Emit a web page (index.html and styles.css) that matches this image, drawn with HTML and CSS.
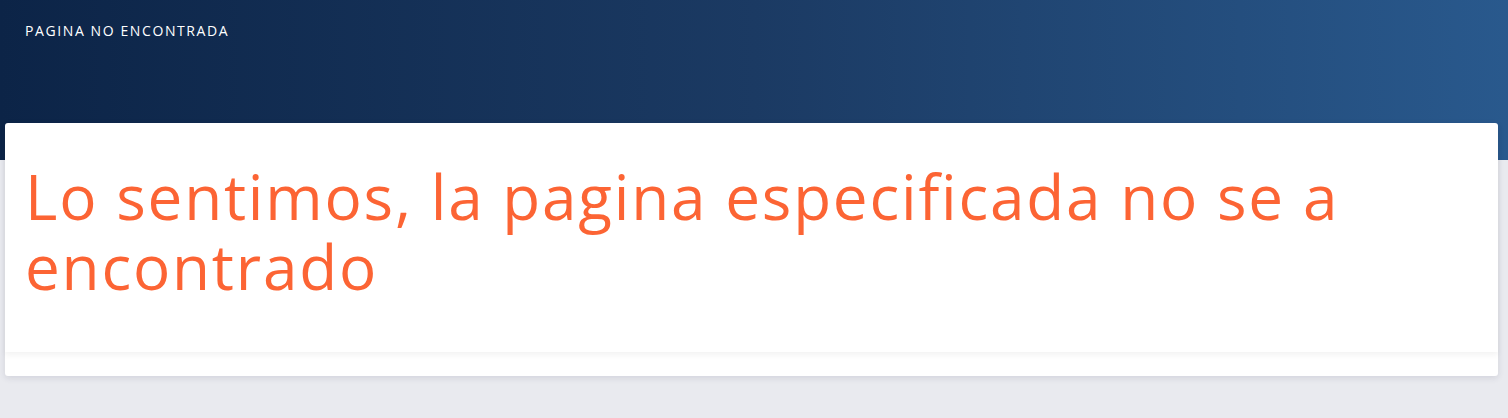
FILE: index.html
```html
<!DOCTYPE html>
<html lang="es">
<head>
<meta charset="utf-8">
<title>Pagina no encontrada</title>
<link rel="stylesheet" href="styles.css">
</head>
<body>
<header class="hero">
  <div class="hero-title">PAGINA NO ENCONTRADA</div>
</header>
<main class="content">
  <section class="card">
    <div class="card-body">
      <h1 class="message">Lo sentimos, la pagina especificada no se a encontrado</h1>
    </div>
    <div class="card-footer"></div>
  </section>
</main>
</body>
</html>
```

FILE: styles.css
```css
* { box-sizing: border-box; }
html, body { margin: 0; padding: 0; }
body {
  background: #e9eaef;
  font-family: "Open Sans", "Lato", sans-serif;
  height: 418px;
  overflow: hidden;
}
.hero {
  height: 160px;
  background: linear-gradient(90deg, #0c2447 0%, #1b3a63 50%, #29598d 100%);
  padding: 22px 25px 0;
}
.hero-title {
  color: #ffffff;
  font-size: 14px;
  letter-spacing: 1.6px;
  line-height: 18px;
}
.content {
  padding: 0 10px 0 5px;
  margin-top: -37px;
}
.card {
  background: #ffffff;
  border-radius: 3px;
  box-shadow: 0 2px 6px rgba(40, 45, 70, 0.12);
}
.card-body {
  height: 229px;
  padding: 38px 20px 0;
  box-shadow: 0 3px 6px rgba(0, 0, 0, 0.05);
  position: relative;
}
.message {
  margin: 0;
  color: #fc6434;
  font-weight: 400;
  font-size: 62px;
  line-height: 70px;
  letter-spacing: 1.8px;
  font-variant-ligatures: none;
}
.card-footer {
  height: 24px;
}
```
